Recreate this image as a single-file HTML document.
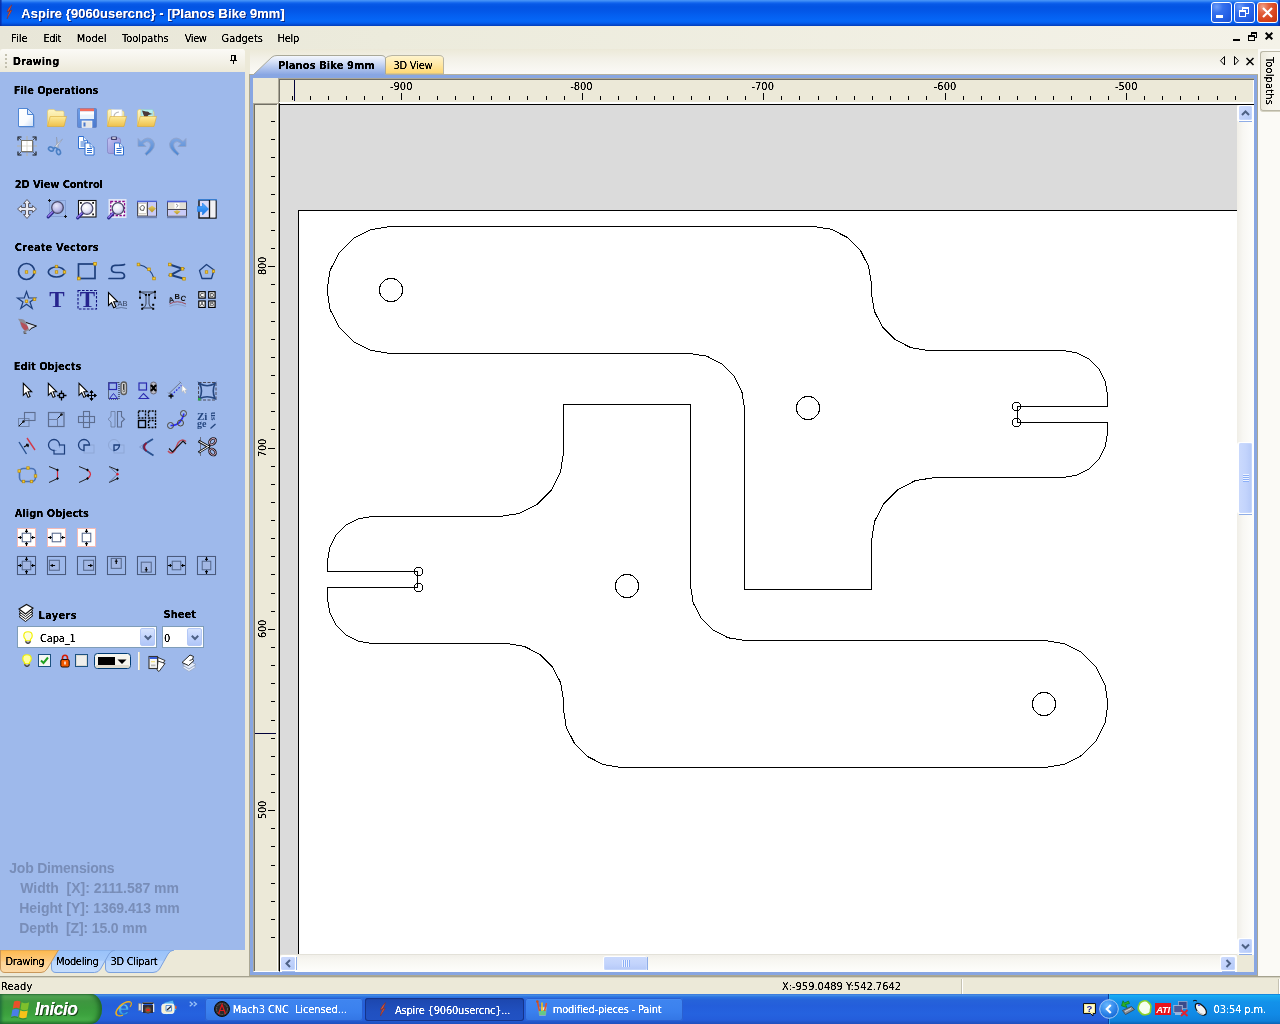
<!DOCTYPE html>
<html lang="es"><head><meta charset="utf-8"><title>Aspire {9060usercnc} - [Planos Bike 9mm]</title>
<style>
*{box-sizing:border-box;margin:0;padding:0}
html,body{width:1280px;height:1024px;overflow:hidden;background:#ece9d8}
body{position:relative;will-change:transform;font-family:"DejaVu Sans Condensed","Liberation Sans",sans-serif;font-size:11px;color:#000;line-height:13px}
.a{position:absolute;white-space:pre}
svg{position:absolute;overflow:visible}
#title{left:0;top:0;width:1280px;height:26px;background:linear-gradient(to bottom,#4b96f8 0,#3a8af5 1px,#1a6cef 2.500px,#0759e7 4px,#0354e3 7px,#0357e8 11px,#0460f1 16px,#0566f6 20px,#0563f4 22px,#0454e0 24px,#0345c8 25px,#0340bb 26px)}
#menu{left:0;top:26px;width:1280px;height:23px;background:linear-gradient(to right,#e8e6d8 0,#ecebdc 30%,#f4f2e8 100%)}
#lhead{left:0;top:49px;width:245px;height:23px;border-radius:3px 3px 0 0;background:linear-gradient(to bottom,#fbfaf6 0,#f4f2e9 50%,#ece9d9 100%)}
#lpanel{left:0;top:72px;width:245px;height:878px;background:#9eb9eb}
#ltabs{left:0;top:950px;width:250px;height:26px;background:#ece9d8}
#tabs{left:250px;top:49px;width:1008px;height:25px;background:linear-gradient(to bottom,#ece9d8 0,#f3f1e8 40%,#fbfaf7 100%)}
#frame{left:250px;top:74px;width:1008px;height:902px;background:#88a6e2}
#canvas{left:280px;top:105px;width:957px;height:850px;background:#dbdbdb;overflow:hidden}
#rstrip{left:1258px;top:49px;width:22px;height:927px;background:#fbfaf6}
#status{left:0;top:976px;width:1280px;height:18px;background:#ece9d8;border-top:1px solid #a5a28f;box-shadow:inset 0 1px 0 #d2cfbd}
#task{left:0;top:994px;width:1280px;height:30px;background:linear-gradient(to bottom,#3168d5 0,#4993e6 1px,#2b71e0 3px,#2663da 6px,#245edb 12px,#2562df 20px,#245ddb 26px,#1f4fbc 30px)}
.fu{font:11px/14px "DejaVu Sans Condensed","Liberation Sans",sans-serif}.fb{font:700 11px/14px "DejaVu Sans Condensed","Liberation Sans",sans-serif}.ft{font:700 13px/16px 'Liberation Sans',sans-serif}.fs{font:italic 700 17.500px/20px 'Liberation Sans',sans-serif}.fj{font:700 14px/16px 'Liberation Sans',sans-serif}.x{filter:url(#tf)}</style></head>
<body>
<svg width="0" height="0" style="left:0;top:0"><defs><filter id="tf" x="-2%" y="-10%" width="104%" height="120%" color-interpolation-filters="sRGB"><feComponentTransfer><feFuncA type="linear" slope="2.200" intercept="-0.350"/></feComponentTransfer></filter></defs></svg>
<div class="a" id="title"><svg style="left:6px;top:4px" width="8" height="16" viewBox="0 0 8 16"><path d="M5.800 .8C3.500 3 1.500 5.500 1.200 8L4.200 6.200C2.600 9 1.300 12 1.200 14.800C2.500 11.800 4.800 9 5.800 6L3 7.500C4 5.200 5.400 2.800 5.800 .8Z" fill="#d8583a" stroke="#8a2a1a" stroke-width=".5"/></svg>
<div class="a" style="left:0;top:0;width:2px;height:26px;background:linear-gradient(to right,#0a2aa0,rgba(10,50,180,.4))"></div>
<div class="a" style="left:1278px;top:0;width:2px;height:26px;background:linear-gradient(to left,#0a2aa0,rgba(10,50,180,.4))"></div>
<div class="a" style="left:1211px;top:2px;width:21px;height:21px;border:1px solid #fff;border-radius:3px;background:radial-gradient(circle at 25% 20%,#6f9ef8 0,#3570ee 30%,#2460e6 65%,#1a4fd0 100%)">
<div class="a" style="left:4px;top:12px;width:7px;height:3px;background:#fff"></div></div>
<div class="a" style="left:1234px;top:2px;width:21px;height:21px;border:1px solid #fff;border-radius:3px;background:radial-gradient(circle at 25% 20%,#6f9ef8 0,#3570ee 30%,#2460e6 65%,#1a4fd0 100%)">
<div class="a" style="left:7px;top:4px;width:7px;height:7px;border:1px solid #fff;border-top-width:2px"></div>
<div class="a" style="left:4px;top:7px;width:7px;height:7px;border:1px solid #fff;border-top-width:2px;background:#2d62e2"></div></div>
<div class="a" style="left:1257px;top:2px;width:21px;height:21px;border:1px solid #fff;border-radius:3px;background:radial-gradient(circle at 25% 20%,#f0a088 0,#e2603c 30%,#d8441c 65%,#c03410 100%)"><svg style="left:4px;top:4px" width="11" height="11" viewBox="0 0 11 11"><path d="M1 1L10 10M10 1L1 10" stroke="#fff" stroke-width="2.2" stroke-linecap="butt"/></svg></div></div>
<div class="a" id="menu">
<div class="a" style="left:1233px;top:13px;width:7px;height:2px;background:#000"></div>
<div class="a" style="left:1251px;top:6px;width:6px;height:6px;border:1px solid #000;border-top-width:2px"></div>
<div class="a" style="left:1248px;top:9px;width:7px;height:6px;border:1px solid #000;border-top-width:2px;background:#f3f1e6"></div><svg style="left:1265px;top:6px" width="8" height="8" viewBox="0 0 8 8"><path d="M.7 .7L7.3 7.3M7.3 .7L.7 7.3" stroke="#000" stroke-width="2"/></svg></div>
<div class="a" id="lhead">
<div class="a" style="left:5px;top:5px;width:2px;height:2px;background:#c3c0af"></div>
<div class="a" style="left:5px;top:9px;width:2px;height:2px;background:#c3c0af"></div>
<div class="a" style="left:5px;top:13px;width:2px;height:2px;background:#c3c0af"></div>
<div class="a" style="left:5px;top:17px;width:2px;height:2px;background:#c3c0af"></div><svg style="left:230px;top:6px" width="7" height="9" viewBox="0 0 7 9" shape-rendering="crispEdges"><path d="M1 0h5v5h1v1h-3v3h-1v-3h-3v-1h1zM2 1v4h2v-4z" fill="#000" fill-rule="evenodd"/></svg></div>
<div class="a" id="lpanel">
<div class="a" style="left:17px;top:554px;width:140px;height:22px;background:#fff;border:1px solid #7f9db9"></div>
<div class="a" style="left:140px;top:556px;width:15px;height:18px;border:1px solid #b4c8f6;border-radius:2px;background:linear-gradient(to bottom,#d8e4fe 0,#c2d4fd 50%,#b0c6f8 100%)"><svg style="left:2.500px;top:5.500px" width="8" height="6" viewBox="0 0 8 6"><path d="M.8 .8L4 4L7.2 .8" fill="none" stroke="#4d6185" stroke-width="2"/></svg></div>
<div class="a" style="left:162px;top:554px;width:42px;height:22px;background:#fff;border:1px solid #7f9db9"></div>
<div class="a" style="left:187px;top:556px;width:15px;height:18px;border:1px solid #b4c8f6;border-radius:2px;background:linear-gradient(to bottom,#d8e4fe 0,#c2d4fd 50%,#b0c6f8 100%)"><svg style="left:2.500px;top:5.500px" width="8" height="6" viewBox="0 0 8 6"><path d="M.8 .8L4 4L7.2 .8" fill="none" stroke="#4d6185" stroke-width="2"/></svg></div>
<div class="a" style="left:0;top:-72px;width:245px;height:0"><svg width="0" height="0" style="left:0;top:0"><defs><linearGradient id="gDoc" x1="0" y1="0" x2="1" y2="1"><stop offset="0" stop-color="#fff"/><stop offset=".6" stop-color="#fafcff"/><stop offset="1" stop-color="#c9dcf7"/></linearGradient><linearGradient id="gFold" x1="0" y1="0" x2="0" y2="1"><stop offset="0" stop-color="#fdeb9a"/><stop offset="1" stop-color="#efc04a"/></linearGradient><linearGradient id="gFoldB" x1="0" y1="0" x2="0" y2="1"><stop offset="0" stop-color="#fef6c4"/><stop offset="1" stop-color="#f2d777"/></linearGradient><linearGradient id="gSave" x1="0" y1="0" x2="1" y2="1"><stop offset="0" stop-color="#6f9fe8"/><stop offset="1" stop-color="#4a78cc"/></linearGradient><linearGradient id="gUndo" x1="0" y1="0" x2="0" y2="1"><stop offset="0" stop-color="#7fa6e2"/><stop offset="1" stop-color="#3f7fd0"/></linearGradient><radialGradient id="gLens" cx=".4" cy=".35" r=".7"><stop offset="0" stop-color="#fff"/><stop offset=".6" stop-color="#e4e4f6"/><stop offset="1" stop-color="#a9a9d6"/></radialGradient><radialGradient id="gLens2" cx=".4" cy=".35" r=".7"><stop offset="0" stop-color="#e6e6fb"/><stop offset=".6" stop-color="#b9b9e6"/><stop offset="1" stop-color="#8787c0"/></radialGradient><linearGradient id="gGold" x1="0" y1="0" x2="0" y2="1"><stop offset="0" stop-color="#e6cf6a"/><stop offset="1" stop-color="#b49222"/></linearGradient><linearGradient id="gArr" x1="0" y1="0" x2="0" y2="1"><stop offset="0" stop-color="#58b0ff"/><stop offset="1" stop-color="#1673e6"/></linearGradient><linearGradient id="gClip" x1="0" y1="0" x2="1" y2="1"><stop offset="0" stop-color="#c4c4f4"/><stop offset="1" stop-color="#8888d0"/></linearGradient></defs></svg><svg style="left:17px;top:108px" width="20" height="20" viewBox="0 0 20 20"><path d="M1.500 .5H10.500L16.500 6.500V18.500H1.500Z" fill="url(#gDoc)" stroke="#4f86d4" stroke-width="1"/><path d="M10.500 .5V6.500H16.500Z" fill="#d5e4fa" stroke="#4f86d4" stroke-width="1" stroke-linejoin="round"/><path d="M2.500 19.500H17.500V7.500" fill="none" stroke="#7f9fd6" stroke-width="1" opacity=".6"/></svg><svg style="left:47px;top:108px" width="20" height="20" viewBox="0 0 20 20"><path d="M.5 18V3.500Q.5 1.500 2.500 1.500H6.500Q8 1.500 8.500 3H15.500Q17 3 17 4.500V18Z" fill="url(#gFoldB)" stroke="#e5c763" stroke-width=".6"/><path d="M3.200 8.500H19.500L17 18.500H.5Z" fill="url(#gFold)" stroke="#d9a93a" stroke-width=".6"/></svg><svg style="left:77px;top:108px" width="20" height="20" viewBox="0 0 20 20"><rect x=".5" y=".5" width="19" height="19" rx="1" fill="url(#gSave)" stroke="#5f7fc0" stroke-width=".8"/><rect x="3" y=".5" width="14" height="3" fill="#f26c5c"/><rect x="3" y="3.500" width="14" height="7.500" fill="#eaf4fd"/><rect x="3" y="3.500" width="14" height="3" fill="#fff"/><rect x="5" y="13" width="10" height="6.500" fill="#e6e6e6"/><rect x="5" y="13" width="10" height="6.500" fill="none" stroke="#fff" stroke-width=".6"/><rect x="6.500" y="14.500" width="2" height="4" fill="#4a78cc"/></svg><svg style="left:107px;top:108px" width="20" height="20" viewBox="0 0 20 20"><path d="M.5 18V3.500Q.5 1.500 2.500 1.500H6.500Q8 1.500 8.500 3H15.500Q17 3 17 4.500V18Z" fill="url(#gFoldB)" stroke="#e5c763" stroke-width=".6"/><path d="M4.500 1.500H15V10H4.500Z" fill="#fff" stroke="#c9d3df" stroke-width=".6"/><path d="M7 9Q7 4.500 12 4" fill="none" stroke="#b9b9b9" stroke-width="1.200"/><path d="M3.200 8.500H19.500L17 18.500H.5Z" fill="url(#gFold)" stroke="#d9a93a" stroke-width=".6"/></svg><svg style="left:137px;top:108px" width="20" height="20" viewBox="0 0 20 20"><path d="M.5 18V3.500Q.5 1.500 2.500 1.500H6.500Q8 1.500 8.500 3H15.500Q17 3 17 4.500V18Z" fill="url(#gFoldB)" stroke="#e5c763" stroke-width=".6"/><path d="M4 1.500H16V10H4Z" fill="#b6f0ee" stroke="#8fc8d0" stroke-width=".6"/><path d="M5 2.500L9 3.500Q12 3 12.500 5L15.500 6L11.500 7Q10 10 7.500 9Q6 6 5 2.500Z" fill="#4a3a3a"/><path d="M7.500 9L9 7.500L8.500 10Z" fill="#c43a3a"/><path d="M3.200 8.500H19.500L17 18.500H.5Z" fill="url(#gFold)" stroke="#d9a93a" stroke-width=".6"/></svg><svg style="left:17px;top:136px" width="20" height="20" viewBox="0 0 20 20"><path d="M1 4.5V1H4.5" fill="none" stroke="#111" stroke-width="1.100"/><path d="M1.5 1.5L4.5 4.5" fill="none" stroke="#333" stroke-width=".8"/><path d="M19 4.5V1H15.5" fill="none" stroke="#111" stroke-width="1.100"/><path d="M18.5 1.5L15.5 4.5" fill="none" stroke="#333" stroke-width=".8"/><path d="M1 15.5V19H4.5" fill="none" stroke="#111" stroke-width="1.100"/><path d="M1.5 18.5L4.5 15.5" fill="none" stroke="#333" stroke-width=".8"/><path d="M19 15.5V19H15.5" fill="none" stroke="#111" stroke-width="1.100"/><path d="M18.5 18.5L15.5 15.5" fill="none" stroke="#333" stroke-width=".8"/><path d="M0 10H20M10 0V20" stroke="#b5b1a3" stroke-width="1"/><rect x="4.500" y="4.500" width="11" height="11" fill="#fff" stroke="#7a776d" stroke-width="1"/><path d="M5 10H15M10 5V15" stroke="#dedbd2" stroke-width="1"/><path d="M5 16.500H16.500V5" fill="none" stroke="#6d7fa8" stroke-width="1" opacity=".6"/></svg><svg style="left:47px;top:136px" width="20" height="20" viewBox="0 0 20 20"><path d="M9.500 1L11.500 11.500L9.500 12.500Z" fill="#c9cfda" stroke="#8d97ad" stroke-width=".6"/><path d="M15.500 3L9 12L7.500 10.500Z" fill="#dfe3ea" stroke="#8d97ad" stroke-width=".6"/><ellipse cx="4" cy="13" rx="2.600" ry="1.900" transform="rotate(25 4 13)" fill="none" stroke="#4a7fc4" stroke-width="1.600"/><ellipse cx="11.500" cy="16" rx="1.900" ry="2.600" transform="rotate(-20 11.500 16)" fill="none" stroke="#4a7fc4" stroke-width="1.600"/><path d="M6.300 12.500L9 11.200M10.500 13.500L9.500 11.700" stroke="#4a7fc4" stroke-width="1.600"/></svg><svg style="left:77px;top:136px" width="20" height="20" viewBox="0 0 20 20"><path d="M1.5 0.5H6.5L10.5 4.5V12.5H1.5Z" fill="#fff" stroke="#2f6fd0" stroke-width="1"/><path d="M6.5 0.5V4.5H10.5" fill="#dbe8fb" stroke="#2f6fd0" stroke-width=".8"/><path d="M3.5 6H8.5M3.5 8H8.5M3.5 10H8.5" stroke="#2f6fd0" stroke-width="1.100"/><path d="M8.0 7.0H13.0L17.0 11.0V19.0H8.0Z" fill="#fff" stroke="#2f6fd0" stroke-width="1"/><path d="M13.0 7.0V11.0H17.0" fill="#dbe8fb" stroke="#2f6fd0" stroke-width=".8"/><path d="M10.0 12.5H15.0M10.0 14.5H15.0M10.0 16.5H15.0" stroke="#2f6fd0" stroke-width="1.100"/></svg><svg style="left:107px;top:136px" width="20" height="20" viewBox="0 0 20 20"><rect x=".5" y="2" width="13" height="15.500" rx="2" fill="url(#gClip)" stroke="#8484c4" stroke-width=".8"/><rect x="4" y=".5" width="6" height="3.500" rx=".8" fill="#3c3c6c"/><rect x="5.200" y="1.300" width="3.600" height="1.500" fill="#e4e4f4"/><path d="M7.5 7.0H12.5L16.5 11.0V19.0H7.5Z" fill="#fff" stroke="#2f6fd0" stroke-width="1"/><path d="M12.5 7.0V11.0H16.5" fill="#dbe8fb" stroke="#2f6fd0" stroke-width=".8"/><path d="M9.5 12.5H14.5M9.5 14.5H14.5M9.5 16.5H14.5" stroke="#2f6fd0" stroke-width="1.100"/></svg><svg style="left:137px;top:137px" width="20" height="20" viewBox="0 0 20 20"><path d="M1 1.500V9.500H9L6 6.500Q10 3 12.500 5.500Q15.500 9.500 8 16.500L9.500 18.500Q21 10 16 3.500Q11 -2 4 4.500Z" fill="url(#gUndo)" stroke="#8f9fc4" stroke-width=".8" opacity=".9"/></svg><svg style="left:167px;top:137px" width="20" height="20" viewBox="0 0 20 20"><g transform="translate(20 0) scale(-1 1)"><path d="M1 1.500V9.500H9L6 6.500Q10 3 12.500 5.500Q15.500 9.500 8 16.500L9.500 18.500Q21 10 16 3.500Q11 -2 4 4.500Z" fill="url(#gUndo)" stroke="#8f9fc4" stroke-width=".8" opacity=".9"/></g></svg><svg style="left:17px;top:199px" width="20" height="20" viewBox="0 0 20 20"><path d="M10 .5L13.500 4.500H11.500V8.500H15.500V6.500L19.500 10L15.500 13.500V11.500H11.500V15.500H13.500L10 19.500L6.500 15.500H8.500V11.500H4.500V13.500L.5 10L4.500 6.500V8.500H8.500V4.500H6.500Z" fill="#eaeaf2" stroke="#5a5a66" stroke-width="1" stroke-linejoin="miter"/></svg><svg style="left:47px;top:199px" width="20" height="20" viewBox="0 0 20 20"><rect x="2.500" y="1.500" width="16" height="16" fill="none" stroke="#7f9bd0" stroke-width=".8"/><path d="M1 1.500H4M2.500 0V3M17 17.500H20M18.500 16V19" stroke="#111" stroke-width="1"/><path d="M6.904 12.096L1.2000000000000002 17.8" stroke="#2a2a8c" stroke-width="3.200" stroke-linecap="round"/><path d="M6.604 11.796L1.2000000000000002 17.2" stroke="#9a7af0" stroke-width="1.300" stroke-linecap="round"/><circle cx="10.5" cy="8.5" r="5.8" fill="url(#gLens2)" stroke="#4a4a6a" stroke-width="1.300"/></svg><svg style="left:77px;top:199px" width="20" height="20" viewBox="0 0 20 20"><rect x="1.500" y="1.500" width="17.500" height="16.500" fill="#fff" stroke="#111" stroke-width="1.100"/><rect x="3" y="3" width="1.800" height="1.800" fill="#111"/><rect x="15.200" y="3" width="1.800" height="1.800" fill="#111"/><rect x="15.200" y="14.500" width="1.800" height="1.800" fill="#111"/><path d="M6.404 13.096L0.7000000000000002 18.8" stroke="#2a2a8c" stroke-width="3.200" stroke-linecap="round"/><path d="M6.104 12.796L0.7000000000000002 18.2" stroke="#9a7af0" stroke-width="1.300" stroke-linecap="round"/><circle cx="10" cy="9.5" r="5.8" fill="url(#gLens)" stroke="#4a4a6a" stroke-width="1.300"/></svg><svg style="left:107px;top:199px" width="20" height="20" viewBox="0 0 20 20"><rect x="1.500" y="0" width="18" height="19" fill="#dfe6f6"/><rect x="3.800" y="2.500" width="13.700" height="14" fill="#fff" stroke="#8a0a8a" stroke-width="1.300" stroke-dasharray="2.400 1.400"/><path d="M7.404 13.096L1.7000000000000002 18.8" stroke="#2a2a8c" stroke-width="3.200" stroke-linecap="round"/><path d="M7.104 12.796L1.7000000000000002 18.2" stroke="#9a7af0" stroke-width="1.300" stroke-linecap="round"/><circle cx="11" cy="9.5" r="5.8" fill="url(#gLens)" stroke="#4a4a6a" stroke-width="1.300"/></svg><svg style="left:137px;top:199px" width="20" height="20" viewBox="0 0 20 20"><rect x=".5" y="2.500" width="19" height="14.500" fill="#f2efe6" stroke="#4a4a5a" stroke-width="1"/><path d="M0 2.500H20" stroke="#4a5fd8" stroke-width="1.600"/><path d="M0 18.500H20" stroke="#5a6a9a" stroke-width="1.400" opacity=".7"/><rect x="10.500" y="3.500" width="8.500" height="13" fill="#c9cbf8"/><path d="M10.500 3V17" stroke="#4a4a5a" stroke-width="1"/><rect x="1.500" y="4.500" width="8" height="10" fill="#fff" stroke="#b9b5a8" stroke-width=".6"/><path d="M5.500 6L7.500 8L6.500 11.500L3.500 11L3 8.500Z" fill="none" stroke="#333" stroke-width=".8"/><path d="M11 9.500L15 6.500L19 9.500L15 13.500Z" fill="url(#gGold)"/></svg><svg style="left:167px;top:199px" width="20" height="20" viewBox="0 0 20 20"><rect x=".5" y="2.500" width="19" height="14.500" fill="#e4e0d6" stroke="#4a4a5a" stroke-width="1"/><path d="M0 2.500H20" stroke="#4a5fd8" stroke-width="1.600"/><path d="M0 18.500H20" stroke="#5a6a9a" stroke-width="1.400" opacity=".7"/><rect x="1" y="11" width="18" height="5.500" fill="#c9cbf8"/><path d="M1 10.500H19" stroke="#4a4a5a" stroke-width="1"/><rect x="7.500" y="4" width="5" height="5.500" fill="#fff"/><path d="M9 5L11 6.500L9.500 8.500" fill="none" stroke="#666" stroke-width=".7"/><path d="M6.500 12.500L10 11L13.500 12.500L10 15.500Z" fill="url(#gGold)"/></svg><svg style="left:197px;top:199px" width="20" height="20" viewBox="0 0 20 20"><rect x="2" y="1" width="17" height="18" fill="#dcdcf6" stroke="#111" stroke-width="1.400"/><path d="M1 .8H20" stroke="#3a8ef0" stroke-width="1.200"/><rect x="13" y="1.500" width="5.500" height="17" fill="#f1f1f4"/><path d="M12.500 1V19" stroke="#111" stroke-width="1.300"/><path d="M.5 7.500H5.500V4L11.500 10L5.500 16V12.500H.5Z" fill="url(#gArr)" stroke="#1a78ea" stroke-width=".6"/></svg><svg style="left:17px;top:262px" width="20" height="20" viewBox="0 0 20 20"><circle cx="9.500" cy="9.500" r="8" fill="none" stroke="#1d3f7c" stroke-width="1.700"/><rect x="8.27" y="8.77" width="2.46" height="2.46" fill="#f9d02c" stroke="#b98c16" stroke-width=".8"/><rect x="16.27" y="8.77" width="2.46" height="2.46" fill="#f9d02c" stroke="#b98c16" stroke-width=".8"/></svg><svg style="left:47px;top:262px" width="20" height="20" viewBox="0 0 20 20"><ellipse cx="9.500" cy="10" rx="8.200" ry="5" fill="none" stroke="#1d3f7c" stroke-width="1.700"/><rect x="8.27" y="3.27" width="2.46" height="2.46" fill="#f9d02c" stroke="#b98c16" stroke-width=".8"/><rect x="8.27" y="8.77" width="2.46" height="2.46" fill="#f9d02c" stroke="#b98c16" stroke-width=".8"/><rect x="16.27" y="8.77" width="2.46" height="2.46" fill="#f9d02c" stroke="#b98c16" stroke-width=".8"/></svg><svg style="left:77px;top:262px" width="20" height="20" viewBox="0 0 20 20"><rect x="1.500" y="2" width="16.500" height="14.500" fill="none" stroke="#1d3f7c" stroke-width="1.700"/><rect x="16.61" y="0.41" width="2.79" height="2.79" fill="#f9d02c" stroke="#b98c16" stroke-width=".8"/><rect x="0.41" y="15.11" width="2.79" height="2.79" fill="#f9d02c" stroke="#b98c16" stroke-width=".8"/></svg><svg style="left:107px;top:262px" width="20" height="20" viewBox="0 0 20 20"><path d="M17.500 2.500Q16 3.300 8 3.300Q4.500 3.500 4.500 7Q4.500 10.500 9 10.500H14Q17.500 11 17.500 14Q17.500 16.500 14 16.500H2" fill="none" stroke="#1d3f7c" stroke-width="1.700" stroke-linecap="round"/></svg><svg style="left:137px;top:262px" width="20" height="20" viewBox="0 0 20 20"><path d="M1.500 2.500Q13.500 5 17 16.500" fill="none" stroke="#1d3f7c" stroke-width="1.100"/><rect x="0.19" y="1.19" width="2.62" height="2.62" fill="#f9d02c" stroke="#b98c16" stroke-width=".8"/><rect x="10.69" y="5.99" width="2.62" height="2.62" fill="#f9d02c" stroke="#b98c16" stroke-width=".8"/><rect x="15.69" y="15.19" width="2.62" height="2.62" fill="#f9d02c" stroke="#b98c16" stroke-width=".8"/></svg><svg style="left:167px;top:262px" width="20" height="20" viewBox="0 0 20 20"><path d="M2.500 2.500L15.500 6.800L3.500 13L17 16.800" fill="none" stroke="#1d3f7c" stroke-width="2"/><rect x="1.49" y="1.19" width="2.62" height="2.62" fill="#f9d02c" stroke="#b98c16" stroke-width=".8"/><rect x="14.19" y="5.49" width="2.62" height="2.62" fill="#f9d02c" stroke="#b98c16" stroke-width=".8"/><rect x="2.19" y="11.69" width="2.62" height="2.62" fill="#f9d02c" stroke="#b98c16" stroke-width=".8"/><rect x="15.69" y="15.49" width="2.62" height="2.62" fill="#f9d02c" stroke="#b98c16" stroke-width=".8"/></svg><svg style="left:197px;top:262px" width="20" height="20" viewBox="0 0 20 20"><path d="M9.500 2.500L17 8L14.500 16.500H5L2.500 8.500Z" fill="none" stroke="#1d3f7c" stroke-width="1.300" stroke-linejoin="round"/><rect x="8.27" y="8.77" width="2.46" height="2.46" fill="#f9d02c" stroke="#b98c16" stroke-width=".8"/><rect x="15.35" y="8.05" width="2.30" height="2.30" fill="#f9d02c" stroke="#b98c16" stroke-width=".8"/></svg><svg style="left:17px;top:290px" width="20" height="20" viewBox="0 0 20 20"><path d="M9.500 1.500L11.700 8H18.500L13 12L15.200 18.500L9.500 14.300L3.800 18.500L6 12L.5 8H7.300Z" fill="none" stroke="#1d3f7c" stroke-width="1.200" stroke-linejoin="miter"/><rect x="8.27" y="10.07" width="2.46" height="2.46" fill="#f9d02c" stroke="#b98c16" stroke-width=".8"/><rect x="16.27" y="8.07" width="2.46" height="2.46" fill="#f9d02c" stroke="#b98c16" stroke-width=".8"/></svg><svg style="left:47px;top:290px" width="20" height="20" viewBox="0 0 20 20"><text x="10" y="17" text-anchor="middle" font-family="Liberation Serif,serif" font-weight="700" font-size="23" fill="#26248e">T</text></svg><svg style="left:77px;top:290px" width="20" height="20" viewBox="0 0 20 20"><rect x="1" y=".5" width="18.500" height="18.500" fill="none" stroke="#10107c" stroke-width="1.100" stroke-dasharray="2.600 1.400"/><text x="10.3" y="17" text-anchor="middle" font-family="Liberation Serif,serif" font-weight="700" font-size="23" fill="#26248e">T</text></svg><svg style="left:107px;top:290px" width="20" height="20" viewBox="0 0 20 20"><g transform="translate(1.5 2.5) scale(1)"><path d="M0 0V13L3 10.200L5.200 15.300L7.400 14.300L5.200 9.300H9.200Z" fill="#fff" stroke="#000" stroke-width="1.100" stroke-linejoin="miter"/></g><text x="10.500" y="16" font-family="Liberation Sans,sans-serif" font-size="7.500" fill="#33415f">AB</text><path d="M9 18.500Q14 16.500 20 18.500" fill="none" stroke="#5a6f96" stroke-width=".9"/></svg><svg style="left:137px;top:290px" width="20" height="20" viewBox="0 0 20 20"><path d="M3 7.500V2H18V7.500M4 2.500Q8.500 3 9 6V14Q8.500 17.500 5.500 18H15.500Q12.500 17.500 12 14V6Q12.500 3 17 2.500" fill="none" stroke="#333a4a" stroke-width=".9"/><rect x="2" y="0.8" width="2" height="2" fill="#000"/><rect x="17" y="0.8" width="2" height="2" fill="#000"/><rect x="2" y="6.8" width="2" height="2" fill="#000"/><rect x="17" y="6.8" width="2" height="2" fill="#000"/><rect x="4.2" y="13.8" width="2" height="2" fill="#000"/><rect x="15.2" y="13.8" width="2" height="2" fill="#000"/><rect x="4.2" y="17.8" width="2" height="2" fill="#000"/><rect x="15.2" y="17.8" width="2" height="2" fill="#000"/><rect x="8" y="3.8" width="2" height="2" fill="#000"/><rect x="11" y="3.8" width="2" height="2" fill="#000"/></svg><svg style="left:167px;top:290px" width="20" height="20" viewBox="0 0 20 20"><text x="1.500" y="12.300" font-family="Liberation Sans,sans-serif" font-weight="700" font-size="7.500" fill="#111" transform="rotate(-16 4 10)">A</text><text x="7.500" y="9.300" font-family="Liberation Sans,sans-serif" font-weight="700" font-size="7.500" fill="#111">B</text><text x="13.500" y="10.800" font-family="Liberation Sans,sans-serif" font-weight="700" font-size="7.500" fill="#111" transform="rotate(16 16 9)">C</text><path d="M2.500 14Q10 9.500 19 14" fill="none" stroke="#9a4a5a" stroke-width="1"/><path d="M2.500 16.500Q10 12.500 19 16.500" fill="none" stroke="#7f8fb4" stroke-width="1.200" opacity=".6"/></svg><svg style="left:197px;top:290px" width="20" height="20" viewBox="0 0 20 20"><rect x="1.8" y="1.7" width="6.400" height="6.400" fill="#fff" stroke="#000" stroke-width="1.200"/><text x="5.0" y="7.0" text-anchor="middle" font-family="Liberation Sans,sans-serif" font-weight="700" font-size="5.500" fill="#333">C</text><rect x="11.7" y="1.7" width="6.400" height="6.400" fill="#fff" stroke="#000" stroke-width="1.200"/><text x="14.899999999999999" y="7.0" text-anchor="middle" font-family="Liberation Sans,sans-serif" font-weight="700" font-size="5.500" fill="#333">D</text><rect x="1.8" y="11" width="6.400" height="6.400" fill="#fff" stroke="#000" stroke-width="1.200"/><text x="5.0" y="16.3" text-anchor="middle" font-family="Liberation Sans,sans-serif" font-weight="700" font-size="5.500" fill="#333">A</text><rect x="11.7" y="11" width="6.400" height="6.400" fill="#fff" stroke="#000" stroke-width="1.200"/><text x="14.899999999999999" y="16.3" text-anchor="middle" font-family="Liberation Sans,sans-serif" font-weight="700" font-size="5.500" fill="#333">B</text></svg><svg style="left:17px;top:318px" width="20" height="17" viewBox="0 0 20 17"><path d="M1 .8L4 1Q7 .5 8.500 3.500L19.500 8L14 10.500Q12 13 9.500 13L9 15.500H7L7.500 12.500Q3.500 9 3 4Z" fill="#8d8d96"/><path d="M3.500 4Q4 9 8 12.500Q11 12 12 9Q7 5 3.500 4Z" fill="#b4505a"/><path d="M9 4.500L19.500 8L14 10.500L12.500 12.500" fill="#d4dcec" stroke="#000" stroke-width=".9" stroke-linejoin="miter"/><path d="M7 13V15.500H9.500" fill="none" stroke="#5a5a5a" stroke-width=".9"/></svg><svg style="left:17px;top:381px" width="20" height="20" viewBox="0 0 20 20"><g transform="translate(6.3 2.3) scale(0.92)"><path d="M0 0V13L3 10.200L5.200 15.300L7.400 14.300L5.200 9.300H9.200Z" fill="#fff" stroke="#000" stroke-width="1.100" stroke-linejoin="miter"/></g></svg><svg style="left:47px;top:381px" width="20" height="20" viewBox="0 0 20 20"><g transform="translate(1.3 2.3) scale(0.92)"><path d="M0 0V13L3 10.200L5.200 15.300L7.400 14.300L5.200 9.300H9.200Z" fill="#fff" stroke="#000" stroke-width="1.100" stroke-linejoin="miter"/></g><rect x="12.500" y="12.500" width="4" height="4" fill="none" stroke="#000" stroke-width="1.300"/><path d="M14.500 9.500V12M14.500 17V19.500M10 14.500H12M17 14.500H19.500" stroke="#000" stroke-width="1.300"/></svg><svg style="left:77px;top:381px" width="20" height="20" viewBox="0 0 20 20"><g transform="translate(2 2.3) scale(0.92)"><path d="M0 0V13L3 10.200L5.200 15.300L7.400 14.300L5.200 9.300H9.200Z" fill="#fff" stroke="#000" stroke-width="1.100" stroke-linejoin="miter"/></g><path d="M14.500 10V19M10 14.500H19M14.500 9.500L13 11.500H16ZM14.500 19.500L13 17.500H16ZM9.500 14.500L11.500 13V16ZM19.500 14.500L17.500 13V16Z" stroke="#000" stroke-width="1" fill="#000"/></svg><svg style="left:107px;top:381px" width="20" height="20" viewBox="0 0 20 20"><rect x="1.500" y="1.500" width="10.500" height="16.500" fill="none" stroke="#111" stroke-width="1" stroke-dasharray="1 1"/><rect x="2" y="2" width="7.500" height="6.500" fill="none" stroke="#2a2ab0" stroke-width="1.200"/><path d="M2.500 17.500L6.500 12.500L10.500 17.500Z" fill="none" stroke="#2a2ab0" stroke-width="1"/><rect x="14" y="1" width="5.500" height="12.500" rx="2.700" fill="#cfcfcf" stroke="#5a5a5a" stroke-width="1.300"/><path d="M16.750 3V11" stroke="#333" stroke-width="1.400"/><circle cx="16.750" cy="9.800" r="1" fill="#eee" stroke="#444" stroke-width=".5"/></svg><svg style="left:137px;top:381px" width="20" height="20" viewBox="0 0 20 20"><rect x="2" y="2" width="7.500" height="7" fill="none" stroke="#2a2ab0" stroke-width="1.200"/><path d="M2 17.500L6.500 12.500L11.500 17.500Z" fill="none" stroke="#2a2ab0" stroke-width="1.100"/><rect x="13.500" y="1" width="6" height="12" rx="3" fill="#b9b9c4" stroke="#6a6a7a" stroke-width="1"/><path d="M14 4L19 10M19 4L14 10" stroke="#000" stroke-width="2"/></svg><svg style="left:167px;top:381px" width="20" height="20" viewBox="0 0 20 20"><path d="M2 12.500L13.500 1.500" stroke="#6a6f80" stroke-width=".9"/><path d="M12.500 .5L14.500 2.500M1 11.500L3 13.500" stroke="#6a6f80" stroke-width=".8"/><path d="M4.500 14L14.500 4.500" stroke="#1a1ae0" stroke-width="1.100" stroke-dasharray="1.600 1.600"/><path d="M4 12.500V17.500M1.500 15H6.500" stroke="#000" stroke-width="1.300"/><g transform="translate(15 4) scale(.55)"><g transform="translate(0 0) scale(1)"><path d="M0 0V13L3 10.200L5.200 15.300L7.400 14.300L5.200 9.300H9.200Z" fill="#fff" stroke="#b9b9b9" stroke-width="1.100" stroke-linejoin="miter"/></g></g></svg><svg style="left:197px;top:381px" width="20" height="20" viewBox="0 0 20 20"><rect x="1.500" y="1.500" width="17.500" height="17.500" fill="none" stroke="#4a4a5a" stroke-width="1" stroke-dasharray="3 1.500"/><path d="M2.500 2.500Q10 7 18 2.500Q14.500 10 18 17.500Q10 14 2.500 17.500Q6.500 10 2.500 2.500Z" fill="none" stroke="#24467f" stroke-width="1.600"/><rect x="1" y="17" width="2.500" height="2.500" fill="#2ea84a"/></svg><svg style="left:17px;top:411px" width="20" height="20" viewBox="0 0 20 20"><rect x="7.500" y="1.500" width="10.500" height="8" fill="none" stroke="#5d6d8f" stroke-width="1.100"/><rect x="1.500" y="7.500" width="10.500" height="8" fill="none" stroke="#5d6d8f" stroke-width="1" opacity=".7"/><path d="M2 15L6.500 10.500" stroke="#111" stroke-width="1"/><circle cx="6.500" cy="10.500" r="1.200" fill="#111"/></svg><svg style="left:47px;top:411px" width="20" height="20" viewBox="0 0 20 20"><rect x="1.500" y="1.500" width="15.500" height="14" fill="none" stroke="#5d6d8f" stroke-width="1.200"/><path d="M1.500 8.500H10.500V15.500" fill="none" stroke="#5d6d8f" stroke-width="1" opacity=".8"/><path d="M10.500 7.500L14.500 3.500" stroke="#111" stroke-width="1"/><circle cx="14.500" cy="3.500" r="1.300" fill="#111"/></svg><svg style="left:77px;top:411px" width="20" height="20" viewBox="0 0 20 20"><rect x="6.500" y=".5" width="6" height="16" fill="none" stroke="#5d6d8f" stroke-width="1.100"/><rect x="1.500" y="5.500" width="16" height="6" fill="none" stroke="#5d6d8f" stroke-width="1.100"/></svg><svg style="left:107px;top:411px" width="20" height="20" viewBox="0 0 20 20"><path d="M8 .5V16H4V11L1 8.200L4 5.500V.5Z" fill="none" stroke="#5d6d8f" stroke-width="1" opacity=".65"/><path d="M10.500 .5V16H14.500V11L17.500 8.200L14.500 5.500V.5Z" fill="none" stroke="#5d6d8f" stroke-width="1.100"/></svg><svg style="left:137px;top:411px" width="20" height="20" viewBox="0 0 20 20"><rect x="1.500" y="0" width="7" height="7" fill="none" stroke="#000" stroke-width="1.400" stroke-dasharray="2 1.200"/><rect x="11.500" y="0" width="7" height="7" fill="none" stroke="#000" stroke-width="1.400" stroke-dasharray="2 1.200"/><rect x="11.500" y="9.500" width="7" height="7" fill="none" stroke="#000" stroke-width="1.400" stroke-dasharray="2 1.200"/><rect x="1.500" y="9.500" width="7" height="7" fill="none" stroke="#000" stroke-width="1.400"/></svg><svg style="left:167px;top:411px" width="20" height="20" viewBox="0 0 20 20"><path d="M3.500 14.500Q14 15 17 2.500" fill="none" stroke="#2a2af0" stroke-width="1.500"/><circle cx="3.500" cy="14.500" r="3" fill="none" stroke="#4a4436" stroke-width="1"/><circle cx="13.500" cy="12" r="3" fill="none" stroke="#4a4436" stroke-width="1"/><circle cx="16.500" cy="2.500" r="3" fill="none" stroke="#4a4436" stroke-width="1"/></svg><svg style="left:197px;top:411px" width="20" height="20" viewBox="0 0 20 20"><text x="0" y="8.500" font-size="11" font-family="Liberation Serif,serif" font-weight="700" fill="#24467f">Zi</text><text x="13.500" y="1" font-size="9" font-family="Liberation Serif,serif" font-weight="700" fill="#24467f" transform="rotate(90 13.500 1)">us</text><text x="0" y="15.500" font-size="10" font-family="Liberation Serif,serif" font-weight="700" fill="#24467f">ge</text><path d="M13.500 17.500L18.500 13" stroke="#24467f" stroke-width="1.400"/></svg><svg style="left:17px;top:437px" width="20" height="20" viewBox="0 0 20 20"><path d="M2 5L9.500 17" stroke="#27508f" stroke-width="1.400"/><path d="M10 1L18 13" stroke="#d23a4a" stroke-width="1.400"/><path d="M7 10L11.500 7.500M11.500 7.500L9 7.500M11.500 7.500L10.800 10" stroke="#111" stroke-width="1.400" fill="none"/></svg><svg style="left:47px;top:437px" width="20" height="20" viewBox="0 0 20 20"><rect x="7" y="8" width="10.500" height="9" fill="none" stroke="#1d3f7c" stroke-width="1.200"/><circle cx="7" cy="8" r="5.500" fill="#9eb9eb" stroke="#1d3f7c" stroke-width="1.300"/><rect x="7.600" y="8.600" width="5" height="5" fill="#9eb9eb"/></svg><svg style="left:77px;top:437px" width="20" height="20" viewBox="0 0 20 20"><rect x="7" y="8" width="10" height="8" fill="none" stroke="#8ea7d6" stroke-width="1"/><path d="M7 8H12.500A5.500 5.500 0 1 0 7 13.500Z" fill="none" stroke="#1d3f7c" stroke-width="1.300"/></svg><svg style="left:107px;top:437px" width="20" height="20" viewBox="0 0 20 20"><rect x="7" y="8" width="10" height="8" fill="none" stroke="#8ea7d6" stroke-width="1"/><circle cx="7" cy="8" r="5.500" fill="none" stroke="#8ea7d6" stroke-width="1"/><path d="M7 8H12.500A5.500 5.500 0 0 1 7 13.500Z" fill="none" stroke="#1d3f7c" stroke-width="1.300"/></svg><svg style="left:137px;top:437px" width="20" height="20" viewBox="0 0 20 20"><path d="M14 2.500L2.500 10L14 17.500" fill="none" stroke="#7f97c8" stroke-width=".9"/><path d="M16 2L8 7Q4.500 10 8 13L16.500 18.500" fill="none" stroke="#27508f" stroke-width="1.700"/><path d="M9.500 6Q5 10 9.500 14" fill="none" stroke="#8a1a3a" stroke-width="1.800"/></svg><svg style="left:167px;top:437px" width="20" height="20" viewBox="0 0 20 20"><path d="M1 14Q4.500 18.500 8 13L11 6Q14.500 1 19 4.500" fill="none" stroke="#c04a5a" stroke-width="1.500"/><path d="M2 11.500L5.500 15L16 4L19 7" fill="none" stroke="#111" stroke-width="1.100"/></svg><svg style="left:197px;top:437px" width="20" height="20" viewBox="0 0 20 20"><path d="M3.500 0V19" stroke="#5a5a66" stroke-width=".8"/><ellipse cx="15.500" cy="4.500" rx="3.600" ry="2.600" transform="rotate(-45 15.500 4.500)" fill="none" stroke="#111" stroke-width="2.400"/><ellipse cx="15.500" cy="4.500" rx="3.600" ry="2.600" transform="rotate(-45 15.500 4.500)" fill="none" stroke="#d9a9c4" stroke-width=".9"/><ellipse cx="15.500" cy="15" rx="3.600" ry="2.600" transform="rotate(45 15.500 15)" fill="none" stroke="#111" stroke-width="2.400"/><ellipse cx="15.500" cy="15" rx="3.600" ry="2.600" transform="rotate(45 15.500 15)" fill="none" stroke="#d9a9c4" stroke-width=".9"/><path d="M1.500 4L13 10.500M1.500 15.500L13 8.500" stroke="#111" stroke-width="2.600"/><path d="M2.500 4.500L12 9.800M2.500 15L12 9.200" stroke="#fff" stroke-width="1"/></svg><svg style="left:17px;top:465px" width="20" height="20" viewBox="0 0 20 20"><rect x="2.500" y="3.500" width="16" height="13" rx="4" fill="none" stroke="#4a72b4" stroke-width="1.600"/><rect x="0.97" y="4.77" width="2.46" height="2.46" fill="#f9d02c" stroke="#b98c16" stroke-width=".8"/><rect x="9.77" y="1.77" width="2.46" height="2.46" fill="#f9d02c" stroke="#b98c16" stroke-width=".8"/><rect x="17.27" y="9.77" width="2.46" height="2.46" fill="#f9d02c" stroke="#b98c16" stroke-width=".8"/><rect x="5.27" y="15.27" width="2.46" height="2.46" fill="#f9d02c" stroke="#b98c16" stroke-width=".8"/><rect x="13.27" y="15.27" width="2.46" height="2.46" fill="#f9d02c" stroke="#b98c16" stroke-width=".8"/></svg><svg style="left:47px;top:465px" width="20" height="20" viewBox="0 0 20 20"><path d="M2 1.500L10.500 5M2 17.500L10.500 13.500" stroke="#222" stroke-width="1" fill="none"/><path d="M10.500 5V13.500" stroke="#d62a3a" stroke-width="1.200"/><path d="M10.500 3.600L11.900 5L10.500 6.400L9.100 5ZM10.500 12.100L11.900 13.500L10.500 14.900L9.100 13.500Z" fill="#000"/></svg><svg style="left:77px;top:465px" width="20" height="20" viewBox="0 0 20 20"><path d="M2 1.500L10.500 5M2 17.500L10.500 13.500" stroke="#222" stroke-width="1" fill="none"/><path d="M10.500 5Q16.500 9.200 10.500 13.500" fill="none" stroke="#d62a3a" stroke-width="1.200"/><path d="M10.500 3.600L11.900 5L10.500 6.400L9.100 5ZM10.500 12.100L11.900 13.500L10.500 14.900L9.100 13.500Z" fill="#000"/></svg><svg style="left:107px;top:465px" width="20" height="20" viewBox="0 0 20 20"><path d="M2 1.500L10.500 5M2 17.500L10.500 13.500" stroke="#222" stroke-width="1" fill="none"/><path d="M2 1.500L10.500 9.200L2 17.500" fill="none" stroke="#5a6a8a" stroke-width=".8"/><path d="M10.500 7.600L12.100 9.200L10.500 10.800L8.900 9.200Z" fill="#e01a2a"/><path d="M10.500 3.600L11.900 5L10.500 6.400L9.100 5ZM10.500 12.100L11.900 13.500L10.500 14.900L9.100 13.500Z" fill="#000"/></svg><svg style="left:17px;top:528px" width="19" height="19" viewBox="0 0 20 20"><rect x=".5" y=".5" width="19" height="19" fill="#fff" stroke="#f6b9b4" stroke-width="1"/><path d="M1 10H5.5M3.5 8.5V11.5" stroke="#000" stroke-width="1.200"/><path d="M19 10H14.5M16.5 8.5V11.5" stroke="#000" stroke-width="1.200"/><path d="M10 1V5.5M8.5 3.5H11.5" stroke="#000" stroke-width="1.200"/><path d="M10 19V14.5M8.5 16.5H11.5" stroke="#000" stroke-width="1.200"/><rect x="5.5" y="5.5" width="9" height="9" fill="#fff" stroke="#56688c" stroke-width="1.100"/></svg><svg style="left:47px;top:528px" width="19" height="19" viewBox="0 0 20 20"><rect x=".5" y=".5" width="19" height="19" fill="#fff" stroke="#f6b9b4" stroke-width="1"/><path d="M1 10H5.5M3.5 8.5V11.5" stroke="#000" stroke-width="1.200"/><path d="M19 10H14.5M16.5 8.5V11.5" stroke="#000" stroke-width="1.200"/><rect x="5.5" y="5.5" width="9" height="9" fill="#fff" stroke="#56688c" stroke-width="1.100"/></svg><svg style="left:77px;top:528px" width="19" height="19" viewBox="0 0 20 20"><rect x=".5" y=".5" width="19" height="19" fill="#fff" stroke="#f6b9b4" stroke-width="1"/><path d="M10 1V5.5M8.5 3.5H11.5" stroke="#000" stroke-width="1.200"/><path d="M10 19V14.5M8.5 16.5H11.5" stroke="#000" stroke-width="1.200"/><rect x="5.5" y="5.5" width="9" height="9" fill="#fff" stroke="#56688c" stroke-width="1.100"/></svg><svg style="left:17px;top:556px" width="19" height="19" viewBox="0 0 20 20"><rect x=".5" y=".5" width="19" height="19" fill="none" stroke="#4a5a7c" stroke-width="1.100"/><path d="M1 10H5.5M3.5 8.5V11.5" stroke="#000" stroke-width="1.200"/><path d="M19 10H14.5M16.5 8.5V11.5" stroke="#000" stroke-width="1.200"/><path d="M10 1V5.5M8.5 3.5H11.5" stroke="#000" stroke-width="1.200"/><path d="M10 19V14.5M8.5 16.5H11.5" stroke="#000" stroke-width="1.200"/><rect x="5.5" y="5.5" width="9" height="9" fill="#a2b7e4" stroke="#56688c" stroke-width="1.100"/></svg><svg style="left:47px;top:556px" width="19" height="19" viewBox="0 0 20 20"><rect x=".5" y=".5" width="19" height="19" fill="none" stroke="#4a5a7c" stroke-width="1.100"/><rect x="2.5" y="4.5" width="10.5" height="10.5" fill="#a2b7e4" stroke="#56688c" stroke-width="1.100"/><path d="M3.500 10H8.500M5.500 8.500V11.500" stroke="#000" stroke-width="1.200"/></svg><svg style="left:77px;top:556px" width="19" height="19" viewBox="0 0 20 20"><rect x=".5" y=".5" width="19" height="19" fill="none" stroke="#4a5a7c" stroke-width="1.100"/><rect x="7" y="4.5" width="10.5" height="10.5" fill="#a2b7e4" stroke="#56688c" stroke-width="1.100"/><path d="M11.500 10H16.500M14.500 8.500V11.500" stroke="#000" stroke-width="1.200"/></svg><svg style="left:107px;top:556px" width="19" height="19" viewBox="0 0 20 20"><rect x=".5" y=".5" width="19" height="19" fill="none" stroke="#4a5a7c" stroke-width="1.100"/><rect x="4.5" y="2.5" width="10.5" height="10.5" fill="#a2b7e4" stroke="#56688c" stroke-width="1.100"/><path d="M9.750 3.500V8.500M8.250 5.500H11.250" stroke="#000" stroke-width="1.200"/></svg><svg style="left:137px;top:556px" width="19" height="19" viewBox="0 0 20 20"><rect x=".5" y=".5" width="19" height="19" fill="none" stroke="#4a5a7c" stroke-width="1.100"/><rect x="4.5" y="6.5" width="10.5" height="10.5" fill="#a2b7e4" stroke="#56688c" stroke-width="1.100"/><path d="M9.750 11.500V16.500M8.250 14.500H11.250" stroke="#000" stroke-width="1.200"/></svg><svg style="left:167px;top:556px" width="19" height="19" viewBox="0 0 20 20"><rect x=".5" y=".5" width="19" height="19" fill="none" stroke="#4a5a7c" stroke-width="1.100"/><path d="M1 10H5.5M3.5 8.5V11.5" stroke="#000" stroke-width="1.200"/><path d="M19 10H14.5M16.5 8.5V11.5" stroke="#000" stroke-width="1.200"/><rect x="5.5" y="5.5" width="9" height="9" fill="#a2b7e4" stroke="#56688c" stroke-width="1.100"/></svg><svg style="left:197px;top:556px" width="19" height="19" viewBox="0 0 20 20"><rect x=".5" y=".5" width="19" height="19" fill="none" stroke="#4a5a7c" stroke-width="1.100"/><path d="M10 1V5.5M8.5 3.5H11.5" stroke="#000" stroke-width="1.200"/><path d="M10 19V14.5M8.5 16.5H11.5" stroke="#000" stroke-width="1.200"/><rect x="5.5" y="5.5" width="9" height="9" fill="#a2b7e4" stroke="#56688c" stroke-width="1.100"/></svg><svg style="left:18px;top:604px" width="16" height="19" viewBox="0 0 16 19"><path d="M1 12.500L8.500 8L15 11.500L7.500 17.500Z" fill="#fff" stroke="#111" stroke-width="1"/><path d="M1 10L8.500 5.500L15 9L7.500 15Z" fill="#fff" stroke="#111" stroke-width="1"/><path d="M1 7.500L8.500 3L15 6.500L7.500 12.500Z" fill="#fff" stroke="#111" stroke-width="1"/><path d="M1 5L8.500 .5L15 4L7.500 10Z" fill="#fff" stroke="#111" stroke-width="1.100"/></svg><svg style="left:23px;top:631px" width="10" height="13.5" viewBox="0 0 11 15"><path d="M5.500 .8Q10.200 .8 10.200 5.200Q10.200 7.500 8.300 9.300V11H2.700V9.300Q.8 7.500 .8 5.200Q.8 .8 5.500 .8Z" fill="#fdfde0" stroke="#f2f200" stroke-width="1.300"/><path d="M3.200 11V13Q5.500 15 7.800 13V11" fill="#e8e8e8" stroke="#222" stroke-width="1"/><path d="M3.500 12.500H7.500" stroke="#222" stroke-width=".8"/></svg><svg style="left:22px;top:654px" width="10" height="13.5" viewBox="0 0 11 15"><path d="M5.500 .8Q10.200 .8 10.200 5.200Q10.200 7.500 8.300 9.300V11H2.700V9.300Q.8 7.500 .8 5.200Q.8 .8 5.500 .8Z" fill="#ffffa0" stroke="#f2f200" stroke-width="1.300"/><path d="M3.200 11V13Q5.500 15 7.800 13V11" fill="#e8e8e8" stroke="#222" stroke-width="1"/><path d="M3.500 12.500H7.500" stroke="#222" stroke-width=".8"/></svg><svg style="left:38px;top:654px" width="13" height="13" viewBox="0 0 13 13"><rect x=".5" y=".5" width="12" height="12" fill="#f7f7f3" stroke="#1c5180" stroke-width="1"/><path d="M3 6.500L5.500 9L10 3.500" fill="none" stroke="#21a121" stroke-width="2"/></svg><svg style="left:60px;top:654px" width="10" height="14" viewBox="0 0 10 14"><path d="M2.500 6V4Q2.500 1.200 5 1.200Q7.500 1.200 7.500 4V6" fill="none" stroke="#d81a00" stroke-width="1.600"/><rect x=".8" y="5.500" width="8.400" height="7.500" rx="1.500" fill="#f25a00" stroke="#1a0a00" stroke-width="1"/><rect x="4.300" y="7.500" width="1.400" height="3" fill="#fff"/></svg><svg style="left:75px;top:654px" width="13" height="13" viewBox="0 0 13 13"><rect x=".5" y=".5" width="12" height="12" fill="#efefec" stroke="#1c5180" stroke-width="1"/><rect x="1.500" y="1.500" width="10" height="10" fill="none" stroke="#dadad4" stroke-width="1"/></svg><svg style="left:94px;top:653px" width="37" height="16" viewBox="0 0 37 16"><rect x=".5" y=".5" width="36" height="15" rx="3" fill="#f6f5ee" stroke="#003c74" stroke-width="1"/><rect x="1.500" y="12" width="34" height="3" rx="1.500" fill="#d9d5c6" opacity=".8"/><rect x="4" y="4" width="17" height="8" fill="#000"/><path d="M23.500 6.500H32.500L28 11Z" fill="#000"/></svg>
<div class="a" style="left:138px;top:652px;width:1px;height:18px;background:#fdfbf2"></div>
<div class="a" style="left:139px;top:652px;width:1px;height:18px;background:#e3dcc0"></div><svg style="left:148px;top:655px" width="19" height="18" viewBox="0 0 19 18"><path d="M10 2.500L17 5.500L11 13.500L9 12Z" fill="#fff" stroke="#222" stroke-width=".9"/><path d="M10 6L17 8.500L11 16.500L9 15Z" fill="#fff" stroke="#222" stroke-width=".9"/><rect x="1" y="1.500" width="8.500" height="12" fill="#f7f7f7" stroke="#333" stroke-width="1.100"/><rect x="1.500" y="2" width="7.500" height="2" fill="#3a5fd8"/><rect x="3" y="6" width="4" height="1.300" fill="#f4e48a"/><rect x="3" y="9.500" width="4.500" height="1.800" fill="#b9b9b9"/></svg><svg style="left:181px;top:654px" width="17" height="19" viewBox="0 0 17 19"><path d="M1.500 13.500L8.500 9.500L15 13L8 17.500Z" fill="#e4ecfa" stroke="#9aa9c8" stroke-width=".8"/><path d="M1.500 11L8.500 7L15 10.500L8 15Z" fill="#e4ecfa" stroke="#8a99b8" stroke-width=".8"/><path d="M1 8.500L9 1L12.500 2.500L11.500 5.500L13 6.500L7.500 11.500Z" fill="#fff" stroke="#222" stroke-width="1"/><path d="M8.500 6.500L11.500 5.500" stroke="#222" stroke-width=".9"/></svg></div></div>
<div class="a" id="ltabs"><svg style="left:0;top:0;overflow:hidden" width="250" height="26" viewBox="0 0 250 26"><defs><linearGradient id="og" x1="0" y1="0" x2="0" y2="1"><stop offset="0" stop-color="#fdb84c"/><stop offset=".45" stop-color="#fdc97c"/><stop offset=".55" stop-color="#fdd394"/><stop offset="1" stop-color="#fcd9a6"/></linearGradient><linearGradient id="bg2" x1="0" y1="0" x2="0" y2="1"><stop offset="0" stop-color="#99c2fa"/><stop offset=".45" stop-color="#a3c8fa"/><stop offset=".5" stop-color="#b9d6fd"/><stop offset="1" stop-color="#c3dcfd"/></linearGradient></defs><path d="M174 0 Q170 .5 168 4 L159.500 19 Q157.500 22.500 153 22.500 L110 22.500 Q105.500 22.500 105.500 18 L105.500 0Z" fill="url(#bg2)" stroke="#7ba1de" stroke-width="1"/><path d="M115 0 Q111 .5 109 4 L100.500 19 Q98.500 22.500 94.500 22.500 L56 22.500 Q51.500 22.500 51.500 18 L51.500 0Z" fill="url(#bg2)" stroke="#7ba1de" stroke-width="1"/><path d="M-1 0 L.5 0 L.5 18 Q.5 22.500 5 22.500 L41 22.500 Q45 22.500 47 19 L58.500 0Z" fill="url(#og)" stroke="#c9975a" stroke-width="1"/></svg></div>
<div class="a" id="frame"></div>
<div class="a" style="left:249px;top:74px;width:1px;height:902px;background:#aaa794"></div>
<div class="a" style="left:1257px;top:74px;width:1px;height:902px;background:#aaa794"></div>
<div class="a" style="left:249px;top:975px;width:1009px;height:1px;background:#aaa794"></div>
<div class="a" style="left:253px;top:78px;width:25px;height:25px;background:#ece9d8"></div>
<div class="a" style="left:278px;top:78px;width:976px;height:27px;background:#ece9d8;border-top:1px solid #aca899;border-left:1px solid #aca899;border-bottom:1px solid #000;box-shadow:inset 0 -2px 0 #fff,inset 1px 1px 0 #716f64,inset -1px 0 0 #fff"></div>
<div class="a" style="left:253px;top:103px;width:27px;height:869px;background:#ece9d8;border-top:1px solid #aca899;border-left:1px solid #aca899;border-right:1px solid #000;border-bottom:1px solid #fff;box-shadow:inset -1px 0 0 #918e7e,inset -2px 0 0 #fff,inset 1px 1px 0 #716f64"></div><svg style="left:0;top:0" width="1280" height="1024" viewBox="0 0 1280 1024" shape-rendering="crispEdges"><path d="M292.5 96V100" stroke="#000" stroke-width="1"/><path d="M310.5 96V100" stroke="#000" stroke-width="1"/><path d="M328.5 96V100" stroke="#000" stroke-width="1"/><path d="M346.5 96V100" stroke="#000" stroke-width="1"/><path d="M364.5 96V100" stroke="#000" stroke-width="1"/><path d="M382.5 96V100" stroke="#000" stroke-width="1"/><path d="M401.5 93V100" stroke="#000" stroke-width="1"/><path d="M419.5 96V100" stroke="#000" stroke-width="1"/><path d="M437.5 96V100" stroke="#000" stroke-width="1"/><path d="M455.5 96V100" stroke="#000" stroke-width="1"/><path d="M473.5 96V100" stroke="#000" stroke-width="1"/><path d="M491.5 96V100" stroke="#000" stroke-width="1"/><path d="M509.5 96V100" stroke="#000" stroke-width="1"/><path d="M527.5 96V100" stroke="#000" stroke-width="1"/><path d="M546.5 96V100" stroke="#000" stroke-width="1"/><path d="M564.5 96V100" stroke="#000" stroke-width="1"/><path d="M582.5 93V100" stroke="#000" stroke-width="1"/><path d="M600.5 96V100" stroke="#000" stroke-width="1"/><path d="M618.5 96V100" stroke="#000" stroke-width="1"/><path d="M636.5 96V100" stroke="#000" stroke-width="1"/><path d="M654.5 96V100" stroke="#000" stroke-width="1"/><path d="M673.5 96V100" stroke="#000" stroke-width="1"/><path d="M691.5 96V100" stroke="#000" stroke-width="1"/><path d="M709.5 96V100" stroke="#000" stroke-width="1"/><path d="M727.5 96V100" stroke="#000" stroke-width="1"/><path d="M745.5 96V100" stroke="#000" stroke-width="1"/><path d="M763.5 93V100" stroke="#000" stroke-width="1"/><path d="M781.5 96V100" stroke="#000" stroke-width="1"/><path d="M799.5 96V100" stroke="#000" stroke-width="1"/><path d="M818.5 96V100" stroke="#000" stroke-width="1"/><path d="M836.5 96V100" stroke="#000" stroke-width="1"/><path d="M854.5 96V100" stroke="#000" stroke-width="1"/><path d="M872.5 96V100" stroke="#000" stroke-width="1"/><path d="M890.5 96V100" stroke="#000" stroke-width="1"/><path d="M908.5 96V100" stroke="#000" stroke-width="1"/><path d="M926.5 96V100" stroke="#000" stroke-width="1"/><path d="M945.5 93V100" stroke="#000" stroke-width="1"/><path d="M963.5 96V100" stroke="#000" stroke-width="1"/><path d="M981.5 96V100" stroke="#000" stroke-width="1"/><path d="M999.5 96V100" stroke="#000" stroke-width="1"/><path d="M1017.5 96V100" stroke="#000" stroke-width="1"/><path d="M1035.5 96V100" stroke="#000" stroke-width="1"/><path d="M1053.5 96V100" stroke="#000" stroke-width="1"/><path d="M1071.5 96V100" stroke="#000" stroke-width="1"/><path d="M1090.5 96V100" stroke="#000" stroke-width="1"/><path d="M1108.5 96V100" stroke="#000" stroke-width="1"/><path d="M1126.5 93V100" stroke="#000" stroke-width="1"/><path d="M1144.5 96V100" stroke="#000" stroke-width="1"/><path d="M1162.5 96V100" stroke="#000" stroke-width="1"/><path d="M1180.5 96V100" stroke="#000" stroke-width="1"/><path d="M1198.5 96V100" stroke="#000" stroke-width="1"/><path d="M1217.5 96V100" stroke="#000" stroke-width="1"/><path d="M1235.5 96V100" stroke="#000" stroke-width="1"/><path d="M294.500 80V101" stroke="#00003a" stroke-width="1"/><path d="M271 121.5H275" stroke="#000" stroke-width="1"/><path d="M271 139.5H275" stroke="#000" stroke-width="1"/><path d="M271 157.5H275" stroke="#000" stroke-width="1"/><path d="M271 176.5H275" stroke="#000" stroke-width="1"/><path d="M271 194.5H275" stroke="#000" stroke-width="1"/><path d="M271 212.5H275" stroke="#000" stroke-width="1"/><path d="M271 230.5H275" stroke="#000" stroke-width="1"/><path d="M271 248.5H275" stroke="#000" stroke-width="1"/><path d="M268 266.5H275" stroke="#000" stroke-width="1"/><path d="M271 284.5H275" stroke="#000" stroke-width="1"/><path d="M271 302.5H275" stroke="#000" stroke-width="1"/><path d="M271 321.5H275" stroke="#000" stroke-width="1"/><path d="M271 339.5H275" stroke="#000" stroke-width="1"/><path d="M271 357.5H275" stroke="#000" stroke-width="1"/><path d="M271 375.5H275" stroke="#000" stroke-width="1"/><path d="M271 393.5H275" stroke="#000" stroke-width="1"/><path d="M271 411.5H275" stroke="#000" stroke-width="1"/><path d="M271 429.5H275" stroke="#000" stroke-width="1"/><path d="M268 448.5H275" stroke="#000" stroke-width="1"/><path d="M271 466.5H275" stroke="#000" stroke-width="1"/><path d="M271 484.5H275" stroke="#000" stroke-width="1"/><path d="M271 502.5H275" stroke="#000" stroke-width="1"/><path d="M271 520.5H275" stroke="#000" stroke-width="1"/><path d="M271 538.5H275" stroke="#000" stroke-width="1"/><path d="M271 556.5H275" stroke="#000" stroke-width="1"/><path d="M271 574.5H275" stroke="#000" stroke-width="1"/><path d="M271 593.5H275" stroke="#000" stroke-width="1"/><path d="M271 611.5H275" stroke="#000" stroke-width="1"/><path d="M268 629.5H275" stroke="#000" stroke-width="1"/><path d="M271 647.5H275" stroke="#000" stroke-width="1"/><path d="M271 665.5H275" stroke="#000" stroke-width="1"/><path d="M271 683.5H275" stroke="#000" stroke-width="1"/><path d="M271 701.5H275" stroke="#000" stroke-width="1"/><path d="M271 720.5H275" stroke="#000" stroke-width="1"/><path d="M271 738.5H275" stroke="#000" stroke-width="1"/><path d="M271 756.5H275" stroke="#000" stroke-width="1"/><path d="M271 774.5H275" stroke="#000" stroke-width="1"/><path d="M271 792.5H275" stroke="#000" stroke-width="1"/><path d="M268 810.5H275" stroke="#000" stroke-width="1"/><path d="M271 828.5H275" stroke="#000" stroke-width="1"/><path d="M271 846.5H275" stroke="#000" stroke-width="1"/><path d="M271 865.5H275" stroke="#000" stroke-width="1"/><path d="M271 883.5H275" stroke="#000" stroke-width="1"/><path d="M271 901.5H275" stroke="#000" stroke-width="1"/><path d="M271 919.5H275" stroke="#000" stroke-width="1"/><path d="M271 937.5H275" stroke="#000" stroke-width="1"/><path d="M255 733.500H276" stroke="#00003a" stroke-width="1"/></svg>
<div class="a" id="canvas">
<div class="a" style="left:18px;top:105px;width:1000px;height:900px;background:#fff;border:1px solid #000"></div></div><svg style="left:0;top:0" width="1280" height="1024" viewBox="0 0 1280 1024" shape-rendering="crispEdges" fill="none" stroke="#000" stroke-width="1"><path d="M390.5 226.5L813.5 226.5L831.4 229.3L847.6 237.6L860.4 250.4L868.7 266.6L871.5 284.5L871.5 293.5L874.3 311.1L882.4 327L895 339.6L910.9 347.7L928.5 350.5L1062.5 350.5L1076.4 352.7L1089 359.1L1098.9 369L1105.3 381.6L1107.5 395.5L1107.5 406.5L1017.5 406.5L1017.5 422.5L1107.5 422.5L1107.5 432.5L1105.3 446.4L1098.9 459L1089 468.9L1076.4 475.3L1062.5 477.5L935 477.5L915.4 480.6L897.7 489.6L883.6 503.7L874.6 521.4L871.5 541L871.5 589.5L744.5 589.5L744.5 408L741.8 391.2L734.1 376L722 363.9L706.8 356.2L690 353.5L390.5 353.5L370.9 350.4L353.2 341.4L339.1 327.3L330.1 309.6L327 290L330.1 270.4L339.1 252.7L353.2 238.6L370.9 229.6L390.5 226.5Z"/><polygon points="402.5,292.3 400.7,296.5 397.5,299.7 393.3,301.5 388.7,301.5 384.5,299.7 381.3,296.5 379.5,292.3 379.5,287.7 381.3,283.5 384.5,280.3 388.7,278.5 393.3,278.5 397.5,280.3 400.7,283.5 402.5,287.7"/><polygon points="819.5,410.3 817.7,414.5 814.5,417.7 810.3,419.5 805.7,419.5 801.5,417.7 798.3,414.5 796.5,410.3 796.5,405.7 798.3,401.5 801.5,398.3 805.7,396.5 810.3,396.5 814.5,398.3 817.7,401.5 819.5,405.7"/><polygon points="1020.8,408.3 1018.3,410.8 1014.7,410.8 1012.2,408.3 1012.2,404.7 1014.7,402.2 1018.3,402.2 1020.8,404.7"/><polygon points="1020.8,424.3 1018.3,426.8 1014.7,426.8 1012.2,424.3 1012.2,420.7 1014.7,418.2 1018.3,418.2 1020.8,420.7"/><g transform="rotate(180 717.500 497)"><path d="M390.5 226.5L813.5 226.5L831.4 229.3L847.6 237.6L860.4 250.4L868.7 266.6L871.5 284.5L871.5 293.5L874.3 311.1L882.4 327L895 339.6L910.9 347.7L928.5 350.5L1062.5 350.5L1076.4 352.7L1089 359.1L1098.9 369L1105.3 381.6L1107.5 395.5L1107.5 406.5L1017.5 406.5L1017.5 422.5L1107.5 422.5L1107.5 432.5L1105.3 446.4L1098.9 459L1089 468.9L1076.4 475.3L1062.5 477.5L935 477.5L915.4 480.6L897.7 489.6L883.6 503.7L874.6 521.4L871.5 541L871.5 589.5L744.5 589.5L744.5 408L741.8 391.2L734.1 376L722 363.9L706.8 356.2L690 353.5L390.5 353.5L370.9 350.4L353.2 341.4L339.1 327.3L330.1 309.6L327 290L330.1 270.4L339.1 252.7L353.2 238.6L370.9 229.6L390.5 226.5Z"/><polygon points="402.5,292.3 400.7,296.5 397.5,299.7 393.3,301.5 388.7,301.5 384.5,299.7 381.3,296.5 379.5,292.3 379.5,287.7 381.3,283.5 384.5,280.3 388.7,278.5 393.3,278.5 397.5,280.3 400.7,283.5 402.5,287.7"/><polygon points="819.5,410.3 817.7,414.5 814.5,417.7 810.3,419.5 805.7,419.5 801.5,417.7 798.3,414.5 796.5,410.3 796.5,405.7 798.3,401.5 801.5,398.3 805.7,396.5 810.3,396.5 814.5,398.3 817.7,401.5 819.5,405.7"/><polygon points="1020.8,408.3 1018.3,410.8 1014.7,410.8 1012.2,408.3 1012.2,404.7 1014.7,402.2 1018.3,402.2 1020.8,404.7"/><polygon points="1020.8,424.3 1018.3,426.8 1014.7,426.8 1012.2,424.3 1012.2,420.7 1014.7,418.2 1018.3,418.2 1020.8,420.7"/></g></svg>
<div class="a" style="left:1237px;top:105px;width:17px;height:850px;background:linear-gradient(to right,#f0eee7 0,#f8f7f3 35%,#fefefc 100%)"></div>
<div class="a" style="left:1237px;top:105px;width:17px;height:17px;background:#fff;border-radius:3px">
<div class="a" style="left:2px;top:1px;width:13px;height:14px;border-radius:2px;background:linear-gradient(135deg,#cfdcfe 0,#c2d3fc 50%,#b1c8f8 100%);box-shadow:inset 0 0 0 1px rgba(200,216,253,.8)"><svg style="left:2.0px;top:3.5px" width="9" height="7" viewBox="0 0 9 7"><path d="M1 5L4.500 1.500L8 5" fill="none" stroke="#4d6185" stroke-width="2"/></svg></div>
<div class="a" style="left:2px;top:16px;width:13px;height:1px;background:#8fade6"></div></div>
<div class="a" style="left:1237px;top:938px;width:17px;height:17px;background:#fff;border-radius:3px">
<div class="a" style="left:2px;top:1px;width:13px;height:14px;border-radius:2px;background:linear-gradient(135deg,#cfdcfe 0,#c2d3fc 50%,#b1c8f8 100%);box-shadow:inset 0 0 0 1px rgba(200,216,253,.8)"><svg style="left:2.0px;top:3.5px" width="9" height="7" viewBox="0 0 9 7"><path d="M1 1.500L4.500 5L8 1.500" fill="none" stroke="#4d6185" stroke-width="2"/></svg></div>
<div class="a" style="left:2px;top:16px;width:13px;height:1px;background:#8fade6"></div></div>
<div class="a" style="left:1237px;top:442px;width:17px;height:72px;background:#fff;border-radius:3px"></div>
<div class="a" style="left:1239px;top:514px;width:13px;height:1px;background:#8fade6"></div>
<div class="a" style="left:1239px;top:443px;width:13px;height:70px;border-radius:2px;background:linear-gradient(to right,#cbdafd 0,#c3d4fc 50%,#b5c9f8 100%);box-shadow:inset 0 0 0 1px rgba(200,216,253,.8)"></div>
<div class="a" style="left:1243px;top:474px;width:6px;height:1px;background:#eef3fe"></div>
<div class="a" style="left:1243px;top:475px;width:6px;height:1px;background:#8cb0f8"></div>
<div class="a" style="left:1243px;top:476px;width:6px;height:1px;background:#eef3fe"></div>
<div class="a" style="left:1243px;top:477px;width:6px;height:1px;background:#8cb0f8"></div>
<div class="a" style="left:1243px;top:478px;width:6px;height:1px;background:#eef3fe"></div>
<div class="a" style="left:1243px;top:479px;width:6px;height:1px;background:#8cb0f8"></div>
<div class="a" style="left:1243px;top:480px;width:6px;height:1px;background:#eef3fe"></div>
<div class="a" style="left:1243px;top:481px;width:6px;height:1px;background:#8cb0f8"></div>
<div class="a" style="left:280px;top:954px;width:957px;height:18px;background:linear-gradient(to bottom,#e3e1d9 0,#e3e1d9 1px,#f1efe9 1px,#f7f6f1 6px,#fefefc 100%)"></div>
<div class="a" style="left:280px;top:955px;width:17px;height:17px;background:#fff;border-radius:3px">
<div class="a" style="left:1px;top:2px;width:14px;height:13px;border-radius:2px;background:linear-gradient(135deg,#cfdcfe 0,#c2d3fc 50%,#b1c8f8 100%);box-shadow:inset 0 0 0 1px rgba(200,216,253,.8)"><svg style="left:3.5px;top:2.0px" width="7" height="9" viewBox="0 0 7 9"><path d="M5 1L1.500 4.500L5 8" fill="none" stroke="#4d6185" stroke-width="2"/></svg></div>
<div class="a" style="left:2px;top:16px;width:13px;height:1px;background:#a9c0ee"></div>
<div class="a" style="left:16px;top:2px;width:1px;height:13px;background:#8fade6"></div></div>
<div class="a" style="left:1220px;top:955px;width:17px;height:17px;background:#fff;border-radius:3px">
<div class="a" style="left:1px;top:2px;width:14px;height:13px;border-radius:2px;background:linear-gradient(135deg,#cfdcfe 0,#c2d3fc 50%,#b1c8f8 100%);box-shadow:inset 0 0 0 1px rgba(200,216,253,.8)"><svg style="left:3.5px;top:2.0px" width="7" height="9" viewBox="0 0 7 9"><path d="M1.500 1L5 4.500L1.500 8" fill="none" stroke="#4d6185" stroke-width="2"/></svg></div>
<div class="a" style="left:2px;top:16px;width:13px;height:1px;background:#a9c0ee"></div></div>
<div class="a" style="left:603px;top:956px;width:44px;height:15px;background:#fff;border-radius:3px"></div>
<div class="a" style="left:647px;top:957px;width:1px;height:13px;background:#8fade6"></div>
<div class="a" style="left:604px;top:957px;width:43px;height:13px;border-radius:2px;background:linear-gradient(to bottom,#cbdafd 0,#c3d4fc 50%,#b5c9f8 100%);box-shadow:inset 0 0 0 1px rgba(200,216,253,.8)"></div>
<div class="a" style="left:622px;top:960px;width:1px;height:7px;background:#eef3fe"></div>
<div class="a" style="left:623px;top:960px;width:1px;height:7px;background:#8cb0f8"></div>
<div class="a" style="left:624px;top:960px;width:1px;height:7px;background:#eef3fe"></div>
<div class="a" style="left:625px;top:960px;width:1px;height:7px;background:#8cb0f8"></div>
<div class="a" style="left:626px;top:960px;width:1px;height:7px;background:#eef3fe"></div>
<div class="a" style="left:627px;top:960px;width:1px;height:7px;background:#8cb0f8"></div>
<div class="a" style="left:628px;top:960px;width:1px;height:7px;background:#eef3fe"></div>
<div class="a" style="left:629px;top:960px;width:1px;height:7px;background:#8cb0f8"></div>
<div class="a" style="left:1237px;top:955px;width:17px;height:17px;background:#ece9d8"></div>
<div class="a" id="tabs"><svg style="left:0;top:0" width="1008" height="25" viewBox="0 0 1008 25"><defs><linearGradient id="tg" x1="0" y1="0" x2="0" y2="1"><stop offset="0" stop-color="#f7f9fe"/><stop offset=".3" stop-color="#d9e3f8"/><stop offset="1" stop-color="#8aa7e3"/></linearGradient><linearGradient id="ty" x1="0" y1="0" x2="0" y2="1"><stop offset="0" stop-color="#fff5cf"/><stop offset=".5" stop-color="#ffe7a4"/><stop offset="1" stop-color="#ffd66e"/></linearGradient></defs><path d="M134 25 L134 10 Q138 6.500 142 6.500 L189 6.500 Q193.500 6.500 193.500 10 L193.500 25Z" fill="url(#ty)" stroke="#b8b5a4" stroke-width="1"/><path d="M3.500 25.500 L22 8 Q24 6.500 27 6.500 L131 6.500 Q135.500 6.500 135.500 10 L135.500 25.500Z" fill="url(#tg)"/><path d="M0 25.500H3.500 L22 8 Q24 6.500 27 6.500 L131 6.500 Q135.500 6.500 135.500 10 L135.500 25" fill="none" stroke="#a9a899" stroke-width="1"/><rect x="136" y="25" width="872" height="1" fill="#b4b19e"/><path d="M974.500 7.500 L974.500 16 L970.500 11.750Z" fill="none" stroke="#000" stroke-width="1"/><path d="M984.500 7.500 L984.500 16 L988.500 11.750Z" fill="none" stroke="#000" stroke-width="1"/><path d="M996.500 9 L1003.500 16 M1003.500 9 L996.500 16" stroke="#000" stroke-width="1.500"/></svg></div>
<div class="a" id="rstrip"></div>
<div class="a" style="left:1260px;top:51px;width:21px;height:60px;border:1px solid #bab7a6;border-right:0;border-radius:3px 0 0 3px;background:linear-gradient(to right,#ece9dc,#f5f3ea 40%,#f7f6ef);box-shadow:0 1px 0 #d5d2c2"></div>
<div class="a" id="status">
<div class="a" style="left:961px;top:2px;width:2px;height:15px;background:linear-gradient(to right,#c5c2b2 50%,#fff 50%)"></div>
<div class="a" style="left:1278px;top:2px;width:2px;height:15px;background:linear-gradient(to right,#c5c2b2 50%,#fff 50%)"></div></div>
<div class="a" id="task">
<div class="a" style="left:0;top:0;width:102px;height:30px;border-radius:0 11px 11px 0/0 15px 15px 0;background:linear-gradient(to bottom,#2f7f30 0,#5aa85a 1px,#4fa450 3px,#3f9640 7px,#3a9a3c 14px,#3da33f 21px,#46ad48 26px,#2f8a32 30px);box-shadow:inset -4px 0 5px -1px rgba(20,80,30,.75),inset 2px 0 3px rgba(20,90,60,.6)"></div>
<div class="a" style="left:205px;top:4px;width:158px;height:23px;border-radius:3px;background:linear-gradient(to bottom,#5c9cf6 0,#3f85f0 2px,#3a80ee 60%,#3375e4 100%);box-shadow:inset 0 0 0 1px #2a60d0"></div>
<div class="a" style="left:365px;top:4px;width:159px;height:23px;border-radius:3px;background:linear-gradient(to bottom,#183c96 0,#1d48b0 2px,#2050c0 60%,#2152c4 100%);box-shadow:inset 0 0 0 1px #15348a"></div>
<div class="a" style="left:525px;top:4px;width:158px;height:23px;border-radius:3px;background:linear-gradient(to bottom,#5c9cf6 0,#3f85f0 2px,#3a80ee 60%,#3375e4 100%);box-shadow:inset 0 0 0 1px #2a60d0"></div>
<div class="a" style="left:1108px;top:0;width:172px;height:30px;background:linear-gradient(to bottom,#0c5fcb 0,#19b2f4 1px,#16a3f0 3px,#1392ea 8px,#118ae6 20px,#0f80da 27px,#0b62b4 30px);border-left:1px solid #0a3f9c;box-shadow:inset 1px 0 0 #2ba8f0"></div><svg style="left:10px;top:6px" width="20.5" height="20" viewBox="0 0 18.500 18.500"><path d="M3.500 1.500Q6.500 -.3 9.500 1.500L8.500 8Q5.500 6.500 2.300 8Z" fill="#e8502a"/><path d="M10.500 2Q13.500 3.800 17.500 2L16.300 8.800Q13 10.300 9.500 8.500Z" fill="#7ec02c"/><path d="M2 9Q5.200 7.500 8.300 9L7.200 15.500Q4.200 14 .8 15.500Z" fill="#4a7ee8"/><path d="M9.300 9.500Q12.500 11.300 16.200 9.800L15 16.300Q11.500 17.800 8.200 16Z" fill="#f6c21a"/><path d="M.8 16.300Q4.200 14.800 7.200 16.300M8.200 16.800Q11.500 18.600 15 17.100" fill="none" stroke="#2a5a2a" stroke-width=".8" opacity=".6"/></svg><svg style="left:115px;top:6px" width="17" height="18" viewBox="0 0 17 18"><defs><linearGradient id="gIE" x1="0" y1="0" x2="0" y2="1"><stop offset="0" stop-color="#8fdcff"/><stop offset="1" stop-color="#1a86e0"/></linearGradient></defs><text x="8.500" y="15" text-anchor="middle" font-family="Liberation Sans,sans-serif" font-weight="700" font-size="21" fill="url(#gIE)" stroke="#1f62c4" stroke-width=".5">e</text><path d="M2.500 15.500Q-1.500 13 5 6Q11 .5 15.500 2" fill="none" stroke="#f2b21a" stroke-width="1.500"/><path d="M15.500 2Q17.500 3.500 15 7" fill="none" stroke="#e8a818" stroke-width="1.200"/><path d="M2.500 15.500Q5 16.500 8 15" fill="none" stroke="#f2b21a" stroke-width="1.200"/></svg><svg style="left:138px;top:8px" width="17" height="12" viewBox="0 0 17 12"><rect x=".5" y="1.500" width="2.500" height="7" fill="#d9d9d9" stroke="#7a7a7a" stroke-width=".5"/><path d="M4.500 10V3Q4.500 1 6.500 1H13.500Q15.500 1 15.500 3V10" fill="none" stroke="#e9e9e9" stroke-width="1.600"/><path d="M4.500 1.200H15.500" stroke="#111" stroke-width="1.400"/><rect x="5" y="3" width="10" height="8" fill="#2a2a3a"/><circle cx="10" cy="8" r="3.200" fill="#7a5a3a" stroke="#4a3a2a" stroke-width=".8"/><rect x="8.500" y="7" width="3" height="2" fill="#f01a1a"/></svg><svg style="left:161px;top:6px" width="17" height="16" viewBox="0 0 17 16"><path d="M3 2.500L12 0L15.500 10L5 15Z" fill="#5ab4f2" stroke="#1a6ad0" stroke-width=".8"/><path d="M.8 6Q1 4 3.500 4H11Q13 4 13 6V11.500Q13 13.500 11 13.500H3Q.8 13.500 .8 11.500Z" fill="#f6f0d0" stroke="#fff" stroke-width=".8"/><path d="M5 5.500H10.500V11H5Z" fill="#e8f2fc" stroke="#3a7ad0" stroke-width=".8"/><path d="M6 10L10 6.500" stroke="#222" stroke-width="1.200"/><path d="M14 5L15 6.500L16.500 6.800L15.200 7.800L15.500 9.300L14 8.500" fill="#f2602a"/></svg><svg style="left:189px;top:7px" width="9" height="6" viewBox="0 0 9 6"><path d="M.7 .7L3.500 3L.7 5.300M4.700 .7L7.500 3L4.700 5.300" fill="none" stroke="#9cc4f8" stroke-width="1.200"/></svg><svg style="left:214px;top:7px" width="16" height="16" viewBox="0 0 16 16"><circle cx="8" cy="8" r="7.500" fill="#2a2a2a" stroke="#0a0a0a" stroke-width="1"/><circle cx="8" cy="8" r="5.500" fill="none" stroke="#6a6a6a" stroke-width="1" stroke-dasharray="1.500 1"/><path d="M4.500 13L8 3.500L11.500 13M6 9.500H10" fill="none" stroke="#e01a1a" stroke-width="1.200"/></svg><svg style="left:379px;top:8px" width="8" height="15" viewBox="0 0 8 15"><path d="M6.500 .5C4.500 2.500 2 5.500 1.300 8L4.200 6.500C2.800 9 1.600 11.500 1.500 14C3 11 5.200 8.500 6.200 6L3.800 7.200C4.800 5 6 2.500 6.500 .5Z" fill="#d8583a" stroke="#8a2a1a" stroke-width=".5"/></svg><svg style="left:536px;top:6px" width="12" height="16" viewBox="0 0 12 16"><path d="M2.500 7H10.500L9.500 15.500H3.500Z" fill="#cfe6f2" stroke="#8aa6b8" stroke-width=".7"/><path d="M3 10H10L9.500 15H3.500Z" fill="#4ac06a" opacity=".8"/><path d="M3.500 11L1.500 2" stroke="#d8502a" stroke-width="1.600"/><path d="M6 11V2.500" stroke="#f2c21a" stroke-width="1.600"/><path d="M8.500 11L10.500 3" stroke="#e8502a" stroke-width="1.600"/><circle cx="1.300" cy="1.500" r="1.300" fill="#c8501a"/><path d="M4.500 11L4 4" stroke="#3a6ad8" stroke-width="1"/></svg><svg style="left:1083px;top:9px" width="13" height="14" viewBox="0 0 13 14"><path d="M.5 .5H12.500V10.500H10V13L7.500 10.500H.5Z" fill="#fffbd0" stroke="#111" stroke-width="1"/><path d="M1.500 1.500H11.500V9.500H1.500Z" fill="none" stroke="#e8d860" stroke-width="1" stroke-dasharray="1 1"/><text x="6.500" y="9.300" text-anchor="middle" font-family="Liberation Sans,sans-serif" font-weight="700" font-size="9.500" fill="#1a1a9a">?</text></svg><svg style="left:1099px;top:5px" width="20" height="20" viewBox="0 0 20 20"><defs><radialGradient id="gRB" cx=".4" cy=".3" r=".8"><stop offset="0" stop-color="#6ab8ff"/><stop offset=".6" stop-color="#2a82e8"/><stop offset="1" stop-color="#125cc8"/></radialGradient></defs><circle cx="10" cy="10" r="9.300" fill="url(#gRB)" stroke="#a9cdf6" stroke-width="1"/><path d="M11.800 6L7.800 10L11.800 14" fill="none" stroke="#fff" stroke-width="2.200"/></svg><svg style="left:1120px;top:6px" width="15" height="15" viewBox="0 0 15 15"><path d="M2.500 10.500L11.500 6.500L14.500 9.500L5.500 14.500Z" fill="#8a8f96" stroke="#3a3f46" stroke-width=".8"/><path d="M5 11.500L11 8.500" stroke="#d8dce2" stroke-width="1"/><path d="M8.500 1L9.500 3.500L5.500 4.500L7 7.500L1.500 5.800L3 .8L4.500 3Z" fill="#2ab02a" stroke="#0a700a" stroke-width=".6"/></svg><svg style="left:1137px;top:6px" width="15" height="16" viewBox="0 0 15 16"><path d="M5 1.500Q9 -.5 11.500 2.500Q15 5 13.500 9.500Q14 14 9.500 14.500Q5 15.500 3 12Q0 9 2 5Q2.500 2.500 5 1.500Z" fill="#f4fff0" stroke="#8ad02a" stroke-width="1.600"/></svg><svg style="left:1155px;top:9px" width="16" height="12" viewBox="0 0 16 12"><rect x="0" y="0" width="16" height="12" fill="#e8121a"/><text x="8" y="9.800" text-anchor="middle" font-family="Liberation Sans,sans-serif" font-weight="700" font-style="italic" font-size="9.500" fill="#fff" letter-spacing="-.3">ATI</text></svg><svg style="left:1173px;top:7px" width="16" height="16" viewBox="0 0 16 16"><rect x="5.500" y=".5" width="8.500" height="7" fill="#3a4a8a" stroke="#9aa6c8" stroke-width=".8"/><rect x=".8" y="4.500" width="8.500" height="7" fill="#4a5a9a" stroke="#b4bcd8" stroke-width=".8"/><path d="M2 13H8" stroke="#c8cce0" stroke-width="1.400"/><path d="M8 9L14.500 15M14.500 9L8 15" stroke="#e8202a" stroke-width="1.800"/></svg><svg style="left:1192px;top:5px" width="16" height="18" viewBox="0 0 16 18"><path d="M1 2Q3 .5 5 2" fill="none" stroke="#111" stroke-width="1"/><path d="M3.500 5.500Q6.500 2.500 11.500 7.500Q15.500 11.500 14 15Q11.500 17.500 7.500 14.500Q2.500 10 3.500 5.500Z" fill="#f4f4f4" stroke="#111" stroke-width="1.200"/><path d="M5.500 5.800L7.500 5.200L8.500 6.500L6.500 7Z" fill="#1a3ae8"/><path d="M5 12Q8 15.500 12 15.500" fill="none" stroke="#c8c8c8" stroke-width="1.200"/></svg></div>
<div class="a x ft" style="left:21.2px;top:5.6px;letter-spacing:0.072px;color:#fff;text-shadow:1px 1px 0 #0a2a8a;">Aspire {9060usercnc} - [Planos Bike 9mm]</div>
<div class="a x fu" style="left:11.0px;top:32.0px;">File</div>
<div class="a x fu" style="left:43.5px;top:32.0px;letter-spacing:-0.466px;">Edit</div>
<div class="a x fu" style="left:76.8px;top:32.0px;">Model</div>
<div class="a x fu" style="left:122.0px;top:32.0px;">Toolpaths</div>
<div class="a x fu" style="left:184.8px;top:32.0px;letter-spacing:-0.467px;">View</div>
<div class="a x fu" style="left:221.5px;top:32.0px;">Gadgets</div>
<div class="a x fu" style="left:277.5px;top:32.0px;letter-spacing:-0.233px;">Help</div>
<div class="a x fb" style="left:12.8px;top:55.0px;">Drawing</div>
<div class="a x fb" style="left:13.8px;top:84.0px;letter-spacing:-0.05px;">File Operations</div>
<div class="a x fb" style="left:14.8px;top:178.0px;letter-spacing:-0.1px;">2D View Control</div>
<div class="a x fb" style="left:14.8px;top:241.0px;letter-spacing:0.108px;">Create Vectors</div>
<div class="a x fb" style="left:13.8px;top:360.0px;">Edit Objects</div>
<div class="a x fb" style="left:14.8px;top:507.0px;">Align Objects</div>
<div class="a x fb" style="left:38.6px;top:609.0px;letter-spacing:0.28px;">Layers</div>
<div class="a x fb" style="left:163.6px;top:608.0px;">Sheet</div>
<div class="a x fu" style="left:40.0px;top:632.0px;letter-spacing:-0.14px;">Capa_1</div>
<div class="a x fu" style="left:164.0px;top:632.0px;">0</div>
<div class="a x fb" style="left:278.0px;top:59.0px;letter-spacing:0.1px;">Planos Bike 9mm</div>
<div class="a x fu" style="left:393.5px;top:59.0px;letter-spacing:-0.233px;">3D View</div>
<div class="a x fu" style="left:5.6px;top:955.0px;letter-spacing:-0.35px;">Drawing</div>
<div class="a x fu" style="left:55.9px;top:955.0px;letter-spacing:-0.3px;">Modeling</div>
<div class="a x fu" style="left:110.6px;top:955.0px;letter-spacing:-0.311px;">3D Clipart</div>
<div class="a x fu" style="left:0.9px;top:980.0px;letter-spacing:0.175px;">Ready</div>
<div class="a x fu" style="left:781.9px;top:980.0px;">X:-959.0489 Y:542.7642</div>
<div class="a x fu" style="left:232.8px;top:1003.0px;letter-spacing:-0.1px;color:#fff;">Mach3 CNC  Licensed...</div>
<div class="a x fu" style="left:394.9px;top:1004.0px;letter-spacing:-0.191px;color:#fff;">Aspire {9060usercnc}...</div>
<div class="a x fu" style="left:552.8px;top:1003.0px;letter-spacing:-0.191px;color:#fff;">modified-pieces - Paint</div>
<div class="a x fu" style="left:1213.6px;top:1003.0px;letter-spacing:-0.156px;color:#fff;">03:54 p.m.</div>
<div class="a x fs" style="left:35.0px;top:999.2px;letter-spacing:-0.56px;color:#fff;text-shadow:1px 1px 1px #1c4a1c;">Inicio</div>
<div class="a fj" style="left:9.3px;top:860.0px;letter-spacing:-0.216px;color:#788db8;">Job Dimensions</div>
<div class="a fj" style="left:20.3px;top:880.0px;letter-spacing:-0.032px;color:#788db8;">Width  [X]: 2111.587 mm</div>
<div class="a fj" style="left:19.3px;top:900.0px;letter-spacing:-0.064px;color:#788db8;">Height [Y]: 1369.413 mm</div>
<div class="a fj" style="left:19.3px;top:920.0px;letter-spacing:-0.117px;color:#788db8;">Depth  [Z]: 15.0 mm</div>
<div class="a x fu" style="left:390.0px;top:80.0px;">-900</div>
<div class="a x fu" style="left:570.2px;top:80.0px;">-800</div>
<div class="a x fu" style="left:751.5px;top:80.0px;">-700</div>
<div class="a x fu" style="left:933.8px;top:80.0px;">-600</div>
<div class="a x fu" style="left:1115.0px;top:80.0px;">-500</div>
<div class="a x fu" style="left:233px;top:259.4px;width:60px;text-align:center;letter-spacing:-.25px;transform:rotate(-90deg)">800</div>
<div class="a x fu" style="left:233px;top:440.7px;width:60px;text-align:center;letter-spacing:-.25px;transform:rotate(-90deg)">700</div>
<div class="a x fu" style="left:233px;top:622.1px;width:60px;text-align:center;letter-spacing:-.25px;transform:rotate(-90deg)">600</div>
<div class="a x fu" style="left:233px;top:803.4px;width:60px;text-align:center;letter-spacing:-.25px;transform:rotate(-90deg)">500</div>
<div class="a x fu" style="left:1239px;top:73.500px;width:60px;text-align:center;letter-spacing:.15px;transform:rotate(90deg)">Toolpaths</div>
</body></html>
